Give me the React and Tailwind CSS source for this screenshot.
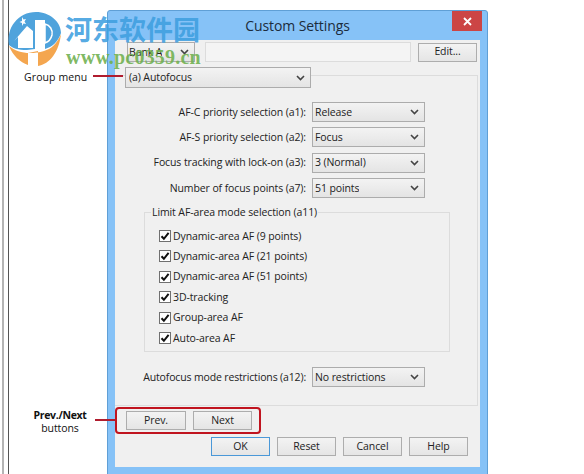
const FONT = '"Open Sans","Noto Sans",sans-serif'

function Chevron({ className = '' }) {
  return (
    <svg width="9" height="6" viewBox="0 0 9 6" className={className}>
      <path d="M1 1l3.5 3.5L8 1" fill="none" stroke="#444" strokeWidth="1.6" />
    </svg>
  )
}

function Select({ label, className = '' }) {
  return (
    <div className={`flex items-center justify-between border border-[#acacac] bg-gradient-to-b from-[#f3f3f3] to-[#e4e4e4] pr-[5px] text-[#222] ${className}`}>
      <span className="truncate pt-[1px]">{label}</span>
      <Chevron />
    </div>
  )
}

function Btn({ label, primary = false, className = '' }) {
  return (
    <div className={`flex h-[19px] w-[59px] items-center justify-center border bg-gradient-to-b from-[#f3f3f3] to-[#e5e5e5] text-[#222] ${primary ? 'border-[#4a98d8]' : 'border-[#adadad]'} ${className}`}>
      {label}
    </div>
  )
}

function Row({ label, value }) {
  return (
    <div className="flex h-[20px] items-center justify-end gap-[6px]">
      <span className="pt-[1px] text-[#222]">{label}</span>
      <Select label={value} className="h-[20px] w-[113px] pl-[2px]" />
    </div>
  )
}

function Check({ label }) {
  return (
    <div className="flex h-[20.4px] items-center gap-[2px]">
      <div className="flex h-[12px] w-[12px] items-center justify-center border border-[#707070] bg-white">
        <svg width="10" height="10" viewBox="0 0 10 10">
          <path d="M1.5 5.2l2.4 2.6L8.6 1.8" fill="none" stroke="#111" strokeWidth="2" />
        </svg>
      </div>
      <span className="pt-[1px] text-[#222]">{label}</span>
    </div>
  )
}

function Logo() {
  return (
    <svg width="70" height="70" viewBox="0 0 70 70" className="absolute left-0 top-0">
      {/* orange swoosh with legs */}
      <path d="M9 46C13 56 20 62 28 65L28 53L38 51L38 66C50 64 59 52 61 34C57 44 51 49 44 51C30 55 17 53 9 46Z" fill="#f4a64f" />
      {/* blue ball */}
      <path d="M9 45C6 28 18 12 36 12C50 12 61 22 61 33C58 42 52 47 45 49L45 20L35 20L35 49L27 50C18 50 12 48 9 45Z" fill="#4fa3dc" />
      {/* white roof and star */}
      <path d="M14 41L27 26L33 31L33 48L18 48L18 37Z" fill="#fff" />
      <path d="M22 17l1.500 2.500 2.500-.5-1.500 2.500 1.500 2.500-2.500-.5-1.500 2.500v-3l-2.500-1 2.500-1z" fill="#fff" />
      {/* D bowl */}
      <path d="M45 24C50 25 53 30 52 35C51 39 48 42 45 43Z" fill="#4fa3dc" stroke="#fff" strokeWidth="1.5" />
    </svg>
  )
}

export default function App() {
  return (
    <div className="relative h-[474px] w-[584px] overflow-hidden bg-white text-[10.5px] tracking-[-0.1px]" style={{ fontFamily: FONT }}>
      {/* background window edges */}
      <div className="absolute bottom-0 left-[2px] top-0 w-[2px] bg-[#b4b4b4]" />
      <div className="absolute bottom-0 left-[8px] top-0 w-[1px] bg-[#555]" />

      {/* dialog */}
      <div className="absolute left-[107px] top-[10px] flex h-[470px] w-[381px] flex-col rounded-[3px] border border-[#5f9fd6] bg-[#86c2f7]">
        <div className="relative flex h-[29px] shrink-0 items-center justify-center text-[14px] text-[#1c2c3c]">
          Custom Settings
          <div className="absolute right-[5px] top-0 flex h-[20px] w-[30px] items-center justify-center bg-[#cc4545]">
            <svg width="9" height="9" viewBox="0 0 9 9">
              <path d="M1 1l7 7M8 1l-7 7" stroke="#fff" strokeWidth="1.8" />
            </svg>
          </div>
        </div>

        <div className="mx-[7px] flex h-[427px] flex-col bg-[#f0f0f0]">
          {/* bank row */}
          <div className="ml-[12px] mt-[2px] flex h-[20px] items-center">
            <Select label="Bank A" className="h-[20px] w-[68px] pl-[1px]" />
            <div className="ml-[10px] h-[20px] w-[206px] border border-[#dcdcdc] bg-[#f4f4f4]" />
            <Btn label="Edit..." className="ml-[7px] w-[50px]" />
          </div>

          {/* tab panel */}
          <div className="relative mr-[2px] mt-[13px] h-[331px] border border-l-0 border-[#dcdcdc] pt-[26px]">
            <Select label="(a) Autofocus" className="absolute left-[10px] top-[-9px] h-[21px] w-[186px] pl-[3px]" />
            <div className="ml-[2px] flex w-[308px] flex-col gap-[5.3px]">
              <Row label="AF-C priority selection (a1):" value="Release" />
              <Row label="AF-S priority selection (a2):" value="Focus" />
              <Row label="Focus tracking with lock-on (a3):" value="3 (Normal)" />
              <Row label="Number of focus points (a7):" value="51 points" />
            </div>

            <div className="relative ml-[29px] mt-[14px] h-[140px] w-[306px] border border-[#dcdcdc] pl-[14px] pt-[13px]">
              <span className="absolute left-[6px] top-[-8px] bg-[#f0f0f0] px-[1px] text-[#222]">
                Limit AF-area mode selection (a11)
              </span>
              <Check label="Dynamic-area AF (9 points)" />
              <Check label="Dynamic-area AF (21 points)" />
              <Check label="Dynamic-area AF (51 points)" />
              <Check label="3D-tracking" />
              <Check label="Group-area AF" />
              <Check label="Auto-area AF" />
            </div>

            <div className="ml-[2px] mt-[15px] flex w-[308px]">
              <div className="flex h-[20px] w-full items-center justify-end gap-[6px]">
                <span className="pt-[1px] tracking-[-0.15px] text-[#222]">Autofocus mode restrictions (a12):</span>
                <Select label="No restrictions" className="h-[20px] w-[113px] pl-[2px]" />
              </div>
            </div>
          </div>

          {/* prev / next */}
          <div className="ml-[11px] mt-[5px] flex gap-[7px]">
            <Btn label="Prev." className="w-[60px]" />
            <Btn label="Next" />
          </div>

          {/* dialog buttons */}
          <div className="ml-[96px] mt-[7px] flex gap-[7px]">
            <Btn label="OK" primary />
            <Btn label="Reset" />
            <Btn label="Cancel" />
            <Btn label="Help" />
          </div>
        </div>
      </div>

      {/* callouts */}
      <div className="absolute left-[24px] top-[70px] tracking-[0.1px] text-[#111]">Group menu</div>
      <div className="absolute left-[93px] top-[75px] h-[2px] w-[30px] bg-[#b01c2e]" />
      <div className="absolute left-[27px] top-[409px] w-[66px] text-center leading-[13px] text-[#111]">
        <div className="font-bold tracking-[-0.3px]">Prev./Next</div>
        <div>buttons</div>
      </div>
      <div className="absolute left-[95px] top-[419px] h-[2px] w-[20px] bg-[#b01c2e]" />
      <div className="absolute left-[115px] top-[407px] h-[27px] w-[146px] rounded-[4px] border-2 border-[#c0141f]" />

      {/* watermark */}
      <Logo />
      <div className="absolute left-[65px] top-[11px] text-[27px] font-bold leading-[36px] tracking-[0px] text-[#3f9fe0]/90" style={{ fontFamily: '"Noto Sans CJK SC",sans-serif' }}>
        河东软件园
      </div>
      <div className="absolute left-[66px] top-[47px] text-[20px] font-bold leading-[20px] tracking-[0.2px] text-[#6fb04f]/90" style={{ fontFamily: '"Liberation Serif",serif' }}>
        www.pc0359.cn
      </div>
    </div>
  )
}
